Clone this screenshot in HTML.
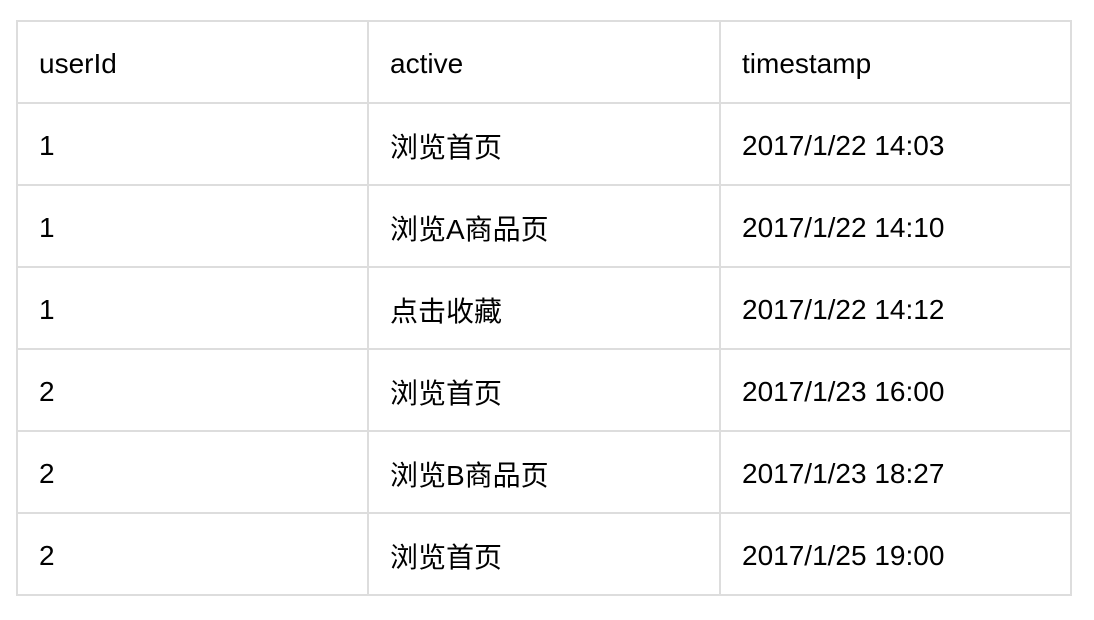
<!DOCTYPE html>
<html><head><meta charset="utf-8"><style>
body{margin:0;background:#fff;}
table{position:absolute;left:16px;top:20px;border-collapse:collapse;width:1056px;font-family:"Liberation Sans","Noto Sans CJK SC",sans-serif;font-size:28px;color:#000;}
td{border:2px solid #ddd;height:78px;padding:3px 0 0 21px;box-sizing:border-box;vertical-align:middle;}
td:nth-child(1){width:351px}td:nth-child(2){width:352px}
</style></head><body>
<table>
<tr style="height:82px"><td>userId</td><td>active</td><td>timestamp</td></tr>
<tr style="height:82px"><td>1</td><td>浏览首页</td><td>2017/1/22 14:03</td></tr>
<tr style="height:82px"><td>1</td><td>浏览A商品页</td><td>2017/1/22 14:10</td></tr>
<tr style="height:82px"><td>1</td><td>点击收藏</td><td>2017/1/22 14:12</td></tr>
<tr style="height:82px"><td>2</td><td>浏览首页</td><td>2017/1/23 16:00</td></tr>
<tr style="height:82px"><td>2</td><td>浏览B商品页</td><td>2017/1/23 18:27</td></tr>
<tr style="height:82px"><td>2</td><td>浏览首页</td><td>2017/1/25 19:00</td></tr>
</table>
</body></html>
